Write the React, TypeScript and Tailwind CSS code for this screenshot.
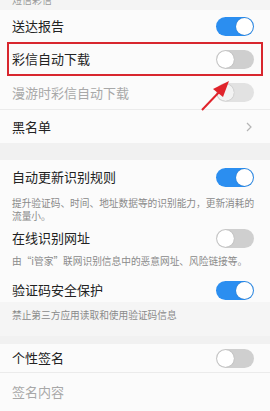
import React from 'react';

const Toggle = ({ on, disabled }: { on?: boolean; disabled?: boolean }) => (
  <div
    className={`w-[38px] h-[19px] rounded-full relative shrink-0 ${
      on ? 'bg-[#2b8ef0]' : disabled ? 'bg-[#e2e2e2]' : 'bg-[#cfcfcf]'
    }`}
  >
    <div
      className={`absolute top-[1px] w-[17px] h-[17px] rounded-full shadow-[0_0_1px_rgba(0,0,0,0.35)] ${
        on ? 'right-[1px] bg-white' : disabled ? 'left-[1px] bg-[#f3f3f3]' : 'left-[1px] bg-white'
      }`}
    />
  </div>
);

const Row = ({
  title,
  h,
  gray,
  children,
  divider,
}: {
  title: string;
  h: string;
  gray?: boolean;
  children?: React.ReactNode;
  divider?: boolean;
}) => (
  <div className={`flex items-center justify-between pl-[12px] pr-[16px] ${h} ${divider ? 'border-b border-[#ebebeb]' : ''}`}>
    <span className={`text-[13px] ${gray ? 'text-[#a8a8a8]' : 'text-[#222]'}`}>{title}</span>
    {children}
  </div>
);

const Desc = ({ text, h }: { text: string; h: string }) => (
  <div className={`px-[12px] pt-[3px] text-[9.7px] leading-[13px] text-[#8a8a8a] ${h}`}>{text}</div>
);

export default function App() {
  return (
    <div
      className="w-[270px] h-[411px] overflow-hidden bg-[#fbfbfb] relative"
      style={{ fontFamily: '"Noto Sans CJK SC", "Noto Sans", sans-serif' }}
    >
      <div className="h-[10px] overflow-hidden bg-[#f4f4f4]">
        <div className="-mt-[7px] pl-[12px] text-[10px] leading-[14px] text-[#9a9a9a]">短信彩信</div>
      </div>
      <Row title="送达报告" h="h-[32px]">
        <Toggle on />
      </Row>
      <div className="mx-[7px] h-[34px] border-2 border-[#d8262e] flex items-center justify-between pl-[3px] pr-[7px]">
        <span className="text-[13px] text-[#222]">彩信自动下载</span>
        <Toggle />
      </div>
      <Row title="漫游时彩信自动下载" h="h-[34px]" gray divider>
        <Toggle disabled />
      </Row>
      <Row title="黑名单" h="h-[33px]">
        <svg width="6" height="10" viewBox="0 0 6 10" className="mr-[2px]">
          <path d="M1 1l4 4-4 4" fill="none" stroke="#b5b5b5" strokeWidth="1.2" />
        </svg>
      </Row>
      <div className="h-[17px] bg-[#f1f1f1]" />
      <Row title="自动更新识别规则" h="h-[34px]">
        <Toggle on />
      </Row>
      <Desc text="提升验证码、时间、地址数据等的识别能力，更新消耗的流量小。" h="h-[30px]" />
      <Row title="在线识别网址" h="h-[28px]">
        <Toggle />
      </Row>
      <Desc text="由“i管家”联网识别信息中的恶意网址、风险链接等。" h="h-[26px]" />
      <Row title="验证码安全保护" h="h-[24px]">
        <Toggle on />
      </Row>
      <div className="bg-[#f5f5f5]">
        <Desc text="禁止第三方应用读取和使用验证码信息" h="h-[34px] pt-[7px]" />
      </div>
      <div className="h-[8px] bg-[#f1f1f1]" />
      <Row title="个性签名" h="h-[29px]" divider>
        <Toggle />
      </Row>
      <Row title="签名内容" h="h-[37px]" gray />

      <svg className="absolute left-0 top-0 pointer-events-none" width="270" height="411">
        <line x1="202" y1="110" x2="222" y2="89" stroke="#e0232b" strokeWidth="2" />
        <polygon points="229,81 213,89 223,97" fill="#e0232b" />
      </svg>
    </div>
  );
}
